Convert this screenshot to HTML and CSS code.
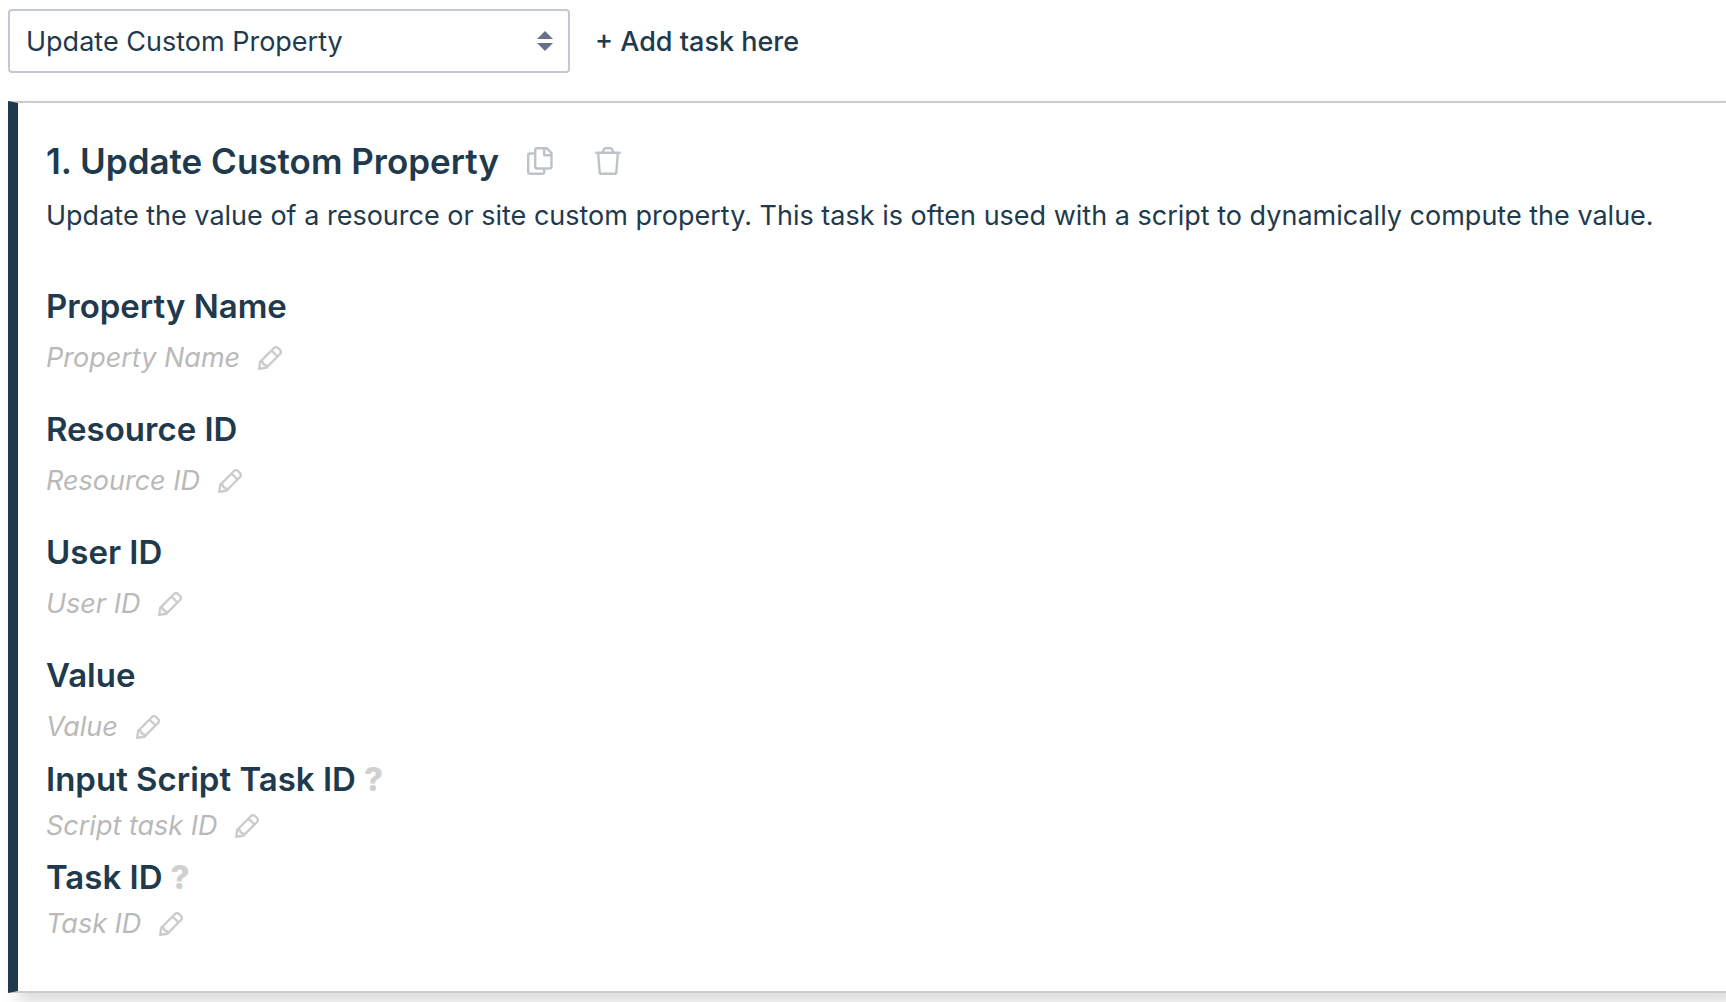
FILE: index.html
```
<!DOCTYPE html>
<html lang="en">
<head>
<meta charset="utf-8">
<meta name="viewport" content="width=device-width, initial-scale=1">
<title>Update Custom Property</title>
<link rel="stylesheet" href="styles.css">
</head>
<body>
<svg class="sprite" aria-hidden="true">
  <symbol id="pencil" viewBox="0 0 24 24">
    <path d="M1.2 22.8l1-7L16 2q2-1.800 4 0l2 2q1.800 2 0 4L8.200 21.800zM13.500 4.500l6 6M2.200 15.800l2.600.400.800 2.200 2.200.800.400 2.600"/>
  </symbol>
  <symbol id="copy" viewBox="0 0 26 28">
    <path d="M8 6.500H3Q1.200 6.500 1.200 8.200V25Q1.200 26.800 3 26.800H15.500Q17.200 26.800 17.200 25V21.500M10 1.200H19.500L24.500 6.200V19.500Q24.500 21.500 22.500 21.500H10Q8.200 21.500 8.200 19.500V3Q8.200 1.200 10 1.200ZM17.200 1.500V8.200H24.200"/>
  </symbol>
  <symbol id="trash" viewBox="0 0 26 28">
    <path d="M1.200 5.800H24.800M3.200 6L4.600 25Q4.800 26.800 6.500 26.800H19.500Q21.200 26.800 21.400 25L22.800 6M7.500 5.500L9 2.200Q9.500 1.200 10.500 1.200H15.500Q16.500 1.200 17 2.200L18.500 5.500"/>
  </symbol>
</svg>

<form class="toolbar">
  <select class="task-select" aria-label="Task type">
    <option>Update Custom Property</option>
  </select>
  <button class="add-task" type="button">+ Add task here</button>
</form>

<main class="card">
  <header class="card-header">
    <h2 class="card-title">1. Update Custom Property</h2>
    <button class="icon-button" type="button" aria-label="Duplicate task"><svg class="icon"><use href="#copy"/></svg></button>
    <button class="icon-button" type="button" aria-label="Delete task"><svg class="icon"><use href="#trash"/></svg></button>
  </header>
  <p class="description">Update the value of a resource or site custom property. This task is often used with a script to dynamically compute the value.</p>

  <section class="fields">
    <div class="field">
      <h3 class="field-name">Property Name</h3>
      <button class="field-value" type="button">Property Name <svg class="pencil"><use href="#pencil"/></svg></button>
    </div>
    <div class="field">
      <h3 class="field-name">Resource ID</h3>
      <button class="field-value" type="button">Resource ID <svg class="pencil"><use href="#pencil"/></svg></button>
    </div>
    <div class="field">
      <h3 class="field-name">User ID</h3>
      <button class="field-value" type="button">User ID <svg class="pencil"><use href="#pencil"/></svg></button>
    </div>
    <div class="field">
      <h3 class="field-name">Value</h3>
      <button class="field-value" type="button">Value <svg class="pencil"><use href="#pencil"/></svg></button>
    </div>
  </section>
  <section class="fields fields-compact">
    <div class="field">
      <h3 class="field-name">Input Script Task ID <span class="help">?</span></h3>
      <button class="field-value" type="button">Script task ID <svg class="pencil"><use href="#pencil"/></svg></button>
    </div>
    <div class="field">
      <h3 class="field-name">Task ID <span class="help">?</span></h3>
      <button class="field-value" type="button">Task ID <svg class="pencil"><use href="#pencil"/></svg></button>
    </div>
  </section>
</main>
</body>
</html>
```
FILE: styles.css
```
* {
  box-sizing: border-box;
}

body {
  min-height: 100vh;
  margin: 0;
  padding: 9px 0 9px 8px;
  overflow-x: hidden;
  background: #fff;
  color: #1f3a4d;
  font: 27px/36px Inter, "Liberation Sans", sans-serif;
}

h2,
h3,
p {
  margin: 0;
}

button,
select {
  margin: 0;
  padding: 0;
  border: 0;
  background: none;
  color: inherit;
  font: inherit;
}

button {
  cursor: pointer;
}

.sprite {
  display: none;
}

.toolbar {
  display: flex;
  align-items: center;
  gap: 25px;
  margin-bottom: 28px;
}

.task-select {
  appearance: none;
  width: 562px;
  height: 64px;
  padding: 2px 40px 0 16px;
  border: 2px solid #c3c7d6;
  border-radius: 4px;
  background: url("data:image/svg+xml,%3Csvg xmlns='http://www.w3.org/2000/svg' width='16' height='20'%3E%3Cpath d='M0 8L8 0l8 8zM0 12h16l-8 8z' fill='%23667189'/%3E%3C/svg%3E") no-repeat right 15px center;
}

.add-task {
  padding-top: 2px;
  font-weight: 500;
}

.card {
  padding: 36px 28px 49px;
  border: 2px solid #ccc;
  border-right: 0;
  border-left: 10px solid #1f3a4d;
  box-shadow: 10px 10px 16px rgba(0, 0, 0, 0.14);
}

.card-header {
  display: flex;
  align-items: center;
  margin-bottom: 15px;
}

.card-title {
  margin-right: 28px;
  font-size: 35px;
  font-weight: 600;
  line-height: 44px;
}

.icon-button {
  display: flex;
  margin-right: 42px;
}

.icon,
.pencil {
  fill: none;
  stroke: #bcc4ca;
  stroke-width: 2.4;
  stroke-linejoin: round;
  stroke-linecap: round;
}

.icon {
  width: 26px;
  height: 28px;
}

.description {
  margin-bottom: 52px;
  white-space: nowrap;
}

.fields {
  display: grid;
  gap: 33px;
  margin-bottom: 14px;
}

.field {
  display: grid;
  justify-items: start;
  gap: 14px;
}

.fields-compact {
  gap: 13px;
  margin-bottom: 0;
}

.fields-compact .field {
  gap: 9px;
}

.field-name {
  display: flex;
  gap: 8px;
  font-size: 33px;
  font-weight: 600;
  line-height: 40px;
}

.help {
  color: #d0d0d0;
  font-weight: 800;
}

.field-value {
  display: flex;
  align-items: center;
  gap: 18px;
  color: #b9b9b9;
  font-style: italic;
}

.pencil {
  width: 24px;
  height: 24px;
  stroke: #ccc;
}
```
